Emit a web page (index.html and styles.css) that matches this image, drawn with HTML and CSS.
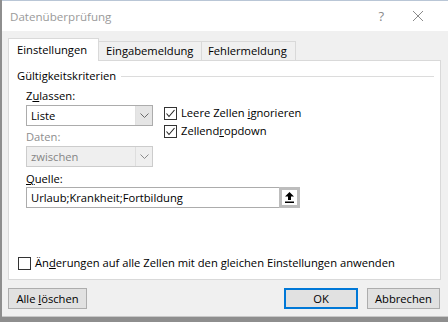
FILE: index.html
```html
<!DOCTYPE html>
<html lang="de">
<head>
<meta charset="utf-8">
<title>Datenüberprüfung</title>
<link rel="stylesheet" href="styles.css">
</head>
<body>
<div class="window">
  <div class="titlebar">
    <span class="title">Datenüberprüfung</span>
    <span class="help">?</span>
    <svg class="close" width="12" height="12" viewBox="0 0 12 12"><path d="M1 1L11 11M11 1L1 11" stroke="#8a8a8a" stroke-width="1" fill="none"/></svg>
  </div>
  <div class="tabs">
    <div class="tab active">Einstellungen</div>
    <div class="tab">Eingabemeldung</div>
    <div class="tab">Fehlermeldung</div>
  </div>
  <div class="panel">
    <div class="group-head"><span>Gültigkeitskriterien</span><span class="rule"></span></div>
    <div class="fields">
      <div class="left-col">
        <div class="label mt4">Z<u>u</u>lassen:</div>
        <div class="combo mt1"><span class="combo-text">Liste</span><span class="combo-btn"><svg width="9" height="5" viewBox="0 0 9 5"><path d="M0.5 0.5L4.5 4.5L8.5 0.5" stroke="#6a6a6a" fill="none"/></svg></span></div>
        <div class="label disabled mt3">Daten:</div>
        <div class="combo combo-disabled mt1"><span class="combo-text">zwischen</span><span class="combo-btn"><svg width="9" height="5" viewBox="0 0 9 5"><path d="M0.5 0.5L4.5 4.5L8.5 0.5" stroke="#8a8a8a" fill="none"/></svg></span></div>
      </div>
      <div class="checks">
        <div class="check-row"><span class="box"><svg width="11" height="11" viewBox="0 0 11 11"><path d="M1.5 5.5L4 8.5L9.5 2" stroke="#222" stroke-width="1.1" fill="none"/></svg></span><span>Leere Zellen <u>i</u>gnorieren</span></div>
        <div class="check-row"><span class="box"><svg width="11" height="11" viewBox="0 0 11 11"><path d="M1.5 5.5L4 8.5L9.5 2" stroke="#222" stroke-width="1.1" fill="none"/></svg></span><span>Zellend<u>r</u>opdown</span></div>
      </div>
    </div>
    <div class="source">
      <div class="label mt4"><u>Q</u>uelle:</div>
      <div class="input">
        <span class="input-text">Urlaub;Krankheit;Fortbildung</span>
        <span class="ref-btn"><svg width="9" height="11" viewBox="0 0 9 11"><path d="M4.5 0L9 4.5H6V8H3V4.5H0Z" fill="#000"/><rect x="0" y="9.5" width="9" height="1.5" fill="#000"/></svg></span>
      </div>
    </div>
    <div class="check-row apply"><span class="box"></span><span>Än<u>d</u>erungen auf alle Zellen mit den gleichen Einstellungen anwenden</span></div>
  </div>
  <div class="buttons">
    <button class="btn">Alle <u>l</u>öschen</button>
    <span class="spacer"></span>
    <button class="btn default">OK</button>
    <button class="btn">Abbrechen</button>
  </div>
</div>
</body>
</html>
```

FILE: styles.css
```css
html, body {
  margin: 0;
  padding: 0;
}
body {
  width: 448px;
  height: 322px;
  overflow: hidden;
  background: #8e8e8e;
  font-family: "Open Sans", "Noto Sans", sans-serif;
  font-size: 11.2px;
  color: #000;
}
u { text-decoration: underline; text-underline-offset: 1px; }
.window {
  margin-left: 2px;
  width: 446px;
  height: 316px;
  background: #f0f0f0;
  border-bottom: 1px solid #c8c8c8;
  display: flex;
  flex-direction: column;
}
.titlebar {
  height: 31px;
  flex: none;
  background: #fff;
  display: flex;
  align-items: center;
  padding-left: 8px;
  box-sizing: border-box;
  border-top: 1px solid #b9c6d6;
}
.title {
  color: #9a9a9a;
  font-size: 11.6px;
  flex: 1;
}
.help {
  color: #8a8a8a;
  font-size: 13px;
  margin-right: 28px;
}
.close { margin-right: 24px; }
.tabs {
  display: flex;
  align-items: flex-end;
  margin: 7px 0 0 6px;
  height: 22px;
  flex: none;
  position: relative;
  z-index: 1;
}
.tab {
  height: 19px;
  line-height: 18px;
  padding: 0 6px;
  box-sizing: border-box;
  border: 1px solid #d9d9d9;
  border-bottom: none;
  background: #f0f0f0;
  margin-left: -1px;
}
.tab.active {
  height: 23px;
  margin-bottom: -1px;
  background: #fff;
  width: 91px;
  padding: 0 0 0 8px;
  line-height: 22px;
  margin-left: 0;
}
.tab:nth-child(2) { width: 104px; padding-left: 7px; }
.tab:nth-child(3) { width: 95px; padding-left: 6px; }
.panel {
  margin-left: 6px;
  width: 433px;
  height: 220px;
  box-sizing: border-box;
  background: #fff;
  border: 1px solid #d9d9d9;
  padding: 7px 6px 8px 8px;
  display: flex;
  flex-direction: column;
  flex: none;
}
.group-head {
  display: flex;
  align-items: center;
  height: 16px;
  line-height: 16px;
}
.rule {
  flex: 1;
  height: 1px;
  background: #dcdcdc;
  margin-left: 5px;
}
.fields {
  display: flex;
  margin-left: 9px;
  gap: 11px;
}
.left-col { width: 127px; display: flex; flex-direction: column; }
.label { height: 16px; line-height: 16px; }
.label.disabled { color: #8d8d8d; }
.mt1 { margin-top: 1px; }
.mt3 { margin-top: 3px; }
.mt4 { margin-top: 4px; }
.combo {
  height: 21px;
  box-sizing: border-box;
  border: 1px solid #acacac;
  display: flex;
  background: #fff;
}
.combo-text {
  flex: 1;
  line-height: 19px;
  padding-left: 4px;
}
.combo-btn {
  width: 16px;
  background: #e5e5e5;
  border-left: 1px solid #e0e0e0;
  display: flex;
  align-items: center;
  justify-content: center;
}
.combo-disabled {
  background: #efefef;
  border-color: #cccccc;
  color: #858585;
}
.combo-disabled .combo-btn { background: #efefef; border-left-color: #dedede; }
.checks {
  margin-top: 21px;
  display: flex;
  flex-direction: column;
  gap: 2px;
}
.check-row {
  display: flex;
  align-items: center;
  height: 16px;
  line-height: 16px;
}
.box {
  width: 13px;
  height: 13px;
  box-sizing: border-box;
  border: 1px solid #333;
  background: #fff;
  margin-right: 4px;
  display: flex;
  align-items: center;
  justify-content: center;
  flex: none;
}
.source { margin-left: 9px; display: flex; flex-direction: column; }
.input {
  width: 274px;
  height: 21px;
  box-sizing: border-box;
  border: 1px solid #acacac;
  display: flex;
}
.input-text { flex: 1; line-height: 19px; padding-left: 4px; }
.ref-btn {
  width: 21px;
  box-sizing: border-box;
  border: 3px solid #bdbdbd;
  margin: -1px -1px -1px 0;
  height: 21px;
  background: #fff;
  display: flex;
  align-items: center;
  justify-content: center;
}
.apply { margin-top: auto; margin-left: 1px; }
.buttons {
  display: flex;
  margin: 8px 0 0 6px;
  width: 432px;
  gap: 9px;
}
.spacer { flex: 1; }
.btn {
  font: inherit;
  color: #000;
  height: 21px;
  width: 79px;
  padding: 0;
  background: #e1e1e1;
  border: 1px solid #adadad;
  box-sizing: border-box;
  line-height: 18px;
}
.btn.default {
  width: 74px;
  border: 2px solid #0078d7;
}
.btn:last-child { width: 73px; }
```
